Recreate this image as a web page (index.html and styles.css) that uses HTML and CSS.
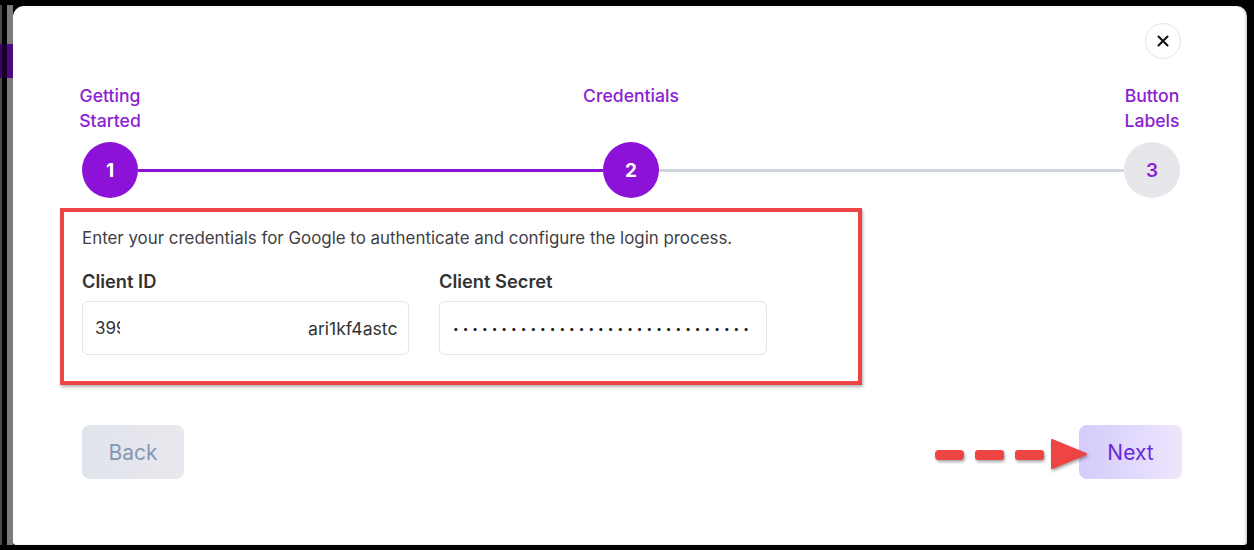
FILE: index.html
```html
<!DOCTYPE html>
<html lang="en">
<head>
<meta charset="utf-8">
<title>Google credentials</title>
<link rel="stylesheet" href="styles.css">
</head>
<body>
  <div class="edge"><div class="edge-mark"></div></div>
  <main class="modal">
    <div class="modal-top">
      <button class="close" aria-label="Close">
        <svg width="12" height="12" viewBox="0 0 12 12"><path d="M1.5 1.5 L10.5 10.5 M10.5 1.5 L1.5 10.5" stroke="#111" stroke-width="2.1" stroke-linecap="round"/></svg>
      </button>
    </div>

    <div class="stepper">
      <div class="step-labels">
        <div class="step-label"><span>Getting<br>Started</span></div>
        <div class="step-label"><span>Credentials</span></div>
        <div class="step-label"><span>Button<br>Labels</span></div>
      </div>
      <div class="step-track">
        <div class="dot done">1</div>
        <div class="bar done"></div>
        <div class="dot done">2</div>
        <div class="bar"></div>
        <div class="dot todo">3</div>
      </div>
    </div>

    <section class="creds">
      <p class="intro">Enter your credentials for Google to authenticate and configure the login process.</p>
      <div class="fields">
        <div class="field">
          <label class="field-label">Client ID</label>
          <div class="input">
            <span class="id-start">399</span>
            <span class="id-end">ari1kf4astc</span>
          </div>
        </div>
        <div class="field">
          <label class="field-label">Client Secret</label>
          <div class="input secret">•••••••••••••••••••••••••••••••</div>
        </div>
      </div>
    </section>

    <div class="actions">
      <button class="btn back">Back</button>
      <div class="next-wrap">
        <svg class="arrow" width="160" height="40" viewBox="0 0 160 40">
          <rect x="5" y="15" width="29" height="10" rx="4" fill="#ef4444"/>
          <rect x="45" y="15" width="29" height="10" rx="3" fill="#ef4444"/>
          <rect x="85" y="15" width="29" height="10" rx="3" fill="#ef4444"/>
          <path d="M122 5 L156 19 L122 33 Z" fill="#ef4444" stroke="#ef4444" stroke-width="2" stroke-linejoin="round"/>
        </svg>
        <button class="btn next">Next</button>
      </div>
    </div>
  </main>
</body>
</html>
```

FILE: styles.css
```css
* { box-sizing: border-box; }

html, body { height: 100%; }

body {
  margin: 0;
  background: #000;
  display: flex;
  padding: 6px 7px 5px 0;
  font-family: "Inter", "Lato", sans-serif;
  color: #333;
}

.edge {
  width: 13px;
  flex: none;
  margin-top: -1px;
  background: linear-gradient(to right, #4a4a4a 0 2px, #000 2px 7px, #7b7b7b 7px 13px);
}

.edge-mark {
  margin-top: 39px;
  height: 34px;
  background: linear-gradient(to right, #3a0764 0 2px, #16002b 2px 7px, #4c0a80 7px 13px);
}

.modal {
  flex: 1;
  background: #fff;
  border-radius: 11px 10px 3px 3px;
  padding: 17px 67px 0 69px;
  box-shadow: inset -2px 0 3px -1px rgba(0,0,0,0.25);
}

.modal-top {
  display: flex;
  justify-content: flex-end;
  margin-right: -1px;
}

.close {
  width: 36px;
  height: 36px;
  border-radius: 50%;
  border: 1px solid #e3e4e8;
  background: #fff;
  display: flex;
  align-items: center;
  justify-content: center;
  padding: 0;
}

.stepper {
  margin-top: 24px;
}

.step-labels {
  display: grid;
  grid-template-columns: 56px 1fr 56px;
}

.step-label {
  display: flex;
  flex-direction: column;
  align-items: center;
  font-size: 17.6px;
  line-height: 25px;
  font-weight: 500;
  color: #8b22d1;
  white-space: nowrap;
  text-align: center;
}

.step-track {
  margin-top: 9px;
  display: flex;
  align-items: center;
}

.dot {
  width: 56px;
  height: 56px;
  flex: none;
  border-radius: 50%;
  display: flex;
  align-items: center;
  justify-content: center;
  font-size: 19px;
  font-weight: 700;
}

.dot.done {
  background: #8c12d8;
  color: #fff;
}

.dot.todo {
  background: #e6e6eb;
  color: #8c1fd3;
  font-weight: 600;
}

.bar {
  flex: 1;
  height: 3px;
  background: #cfd6e2;
}

.bar.done {
  background: #8c12d8;
}

.creds {
  margin-top: 10px;
  margin-left: -22px;
  width: 802px;
  border: 4px solid #ed4545;
  box-shadow: 1px 2px 3px rgba(0,0,0,0.3);
  padding: 14px 18px 26px 18px;
}

.intro {
  margin: 0;
  font-size: 16.9px;
  line-height: 24px;
  color: #3f3f46;
  white-space: nowrap;
}

.fields {
  margin-top: 19px;
  display: grid;
  grid-template-columns: 327px 328px;
  column-gap: 30px;
}

.field {
  display: flex;
  flex-direction: column;
  gap: 8px;
}

.field-label {
  font-size: 18.3px;
  line-height: 24px;
  font-weight: 600;
  color: #333;
}

.input {
  height: 54px;
  border: 1px solid #e4e5e9;
  border-radius: 6px;
  display: flex;
  align-items: center;
  padding: 0 12px;
  overflow: hidden;
  font-size: 17px;
  color: #333;
  white-space: nowrap;
}

.id-start {
  width: 25px;
  overflow: hidden;
}

.id-end {
  margin-left: auto;
  margin-right: -1px;
  width: 89px;
  overflow: hidden;
  font-size: 17.6px;
}

.secret {
  padding-left: 13px;
  font-size: 10px;
  letter-spacing: 4.05px;
  color: #222;
}

.actions {
  margin-top: 40px;
  margin-right: -2px;
  display: flex;
  justify-content: space-between;
  align-items: center;
}

.btn {
  height: 54px;
  border: none;
  border-radius: 8px;
  font-family: inherit;
  font-size: 21px;
  padding: 0;
}

.back {
  width: 102px;
  background: linear-gradient(to right, #e1e3eb, #e8e9ee);
  color: #8497b3;
}

.next-wrap {
  display: flex;
  align-items: center;
}

.arrow {
  position: relative;
  z-index: 1;
  margin-right: -11px;
  margin-top: 5px;
  filter: drop-shadow(1px 2px 1.5px rgba(0,0,0,0.35));
}

.next {
  width: 103px;
  background: linear-gradient(to right, #d4cbfd, #ede6fb);
  color: #6d28d9;
}
```
